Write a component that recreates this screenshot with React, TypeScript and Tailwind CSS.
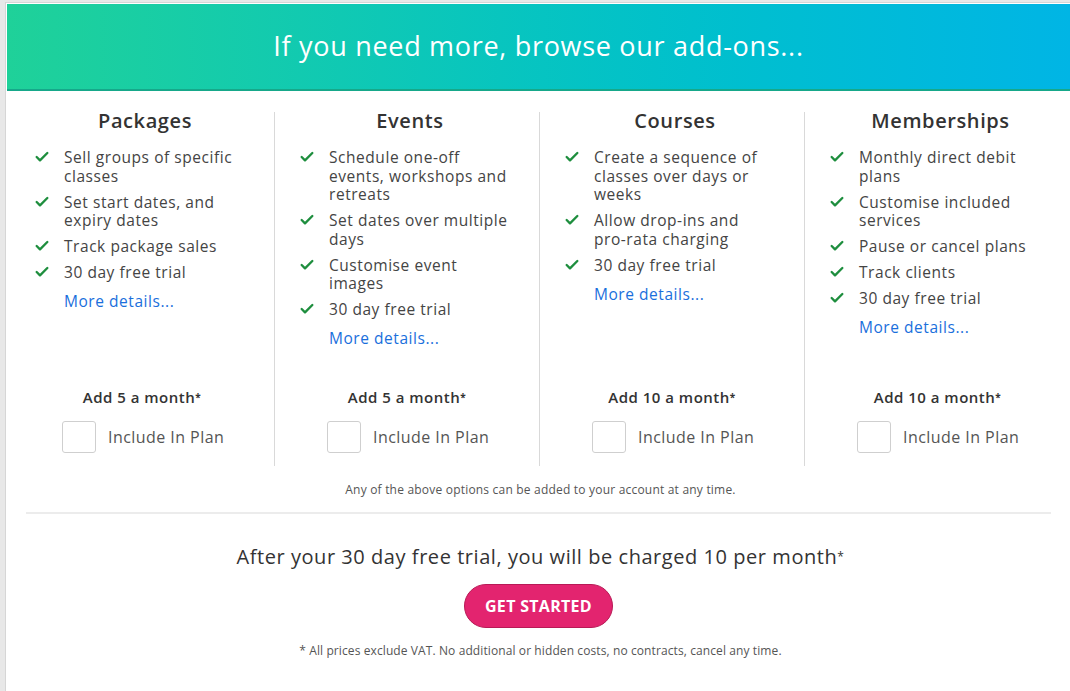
import { Check } from "lucide-react";

type AddOn = {
    title: string;
    features: string[];
    price: string;
};

const addOns: AddOn[] = [
    {
        title: "Packages",
        features: [
            "Sell groups of specific classes",
            "Set start dates, and expiry dates",
            "Track package sales",
            "30 day free trial",
        ],
        price: "Add 5 a month",
    },
    {
        title: "Events",
        features: [
            "Schedule one-off events, workshops and retreats",
            "Set dates over multiple days",
            "Customise event images",
            "30 day free trial",
        ],
        price: "Add 5 a month",
    },
    {
        title: "Courses",
        features: [
            "Create a sequence of classes over days or weeks",
            "Allow drop-ins and pro-rata charging",
            "30 day free trial",
        ],
        price: "Add 10 a month",
    },
    {
        title: "Memberships",
        features: [
            "Monthly direct debit plans",
            "Customise included services",
            "Pause or cancel plans",
            "Track clients",
            "30 day free trial",
        ],
        price: "Add 10 a month",
    },
];

function AddOnColumn({ addOn, last }: { addOn: AddOn; last: boolean }) {
    return (
        <div
            className={
                "flex flex-col pl-[24px] pr-[18px] " +
                (last ? "" : "border-r border-[#d9d9d9]")
            }
        >
            <h3 className="text-center text-[20px] font-semibold text-[#333] leading-[24px] tracking-[0.6px] -mt-[3px] mb-[15px]">
                {addOn.title}
            </h3>
            <ul className="flex-1 tracking-[0.55px]">
                {addOn.features.map((text) => (
                    <li key={text} className="flex items-start mb-[7.5px]">
                        <Check
                            className="w-[16px] h-[16px] text-[#1e8e3e] mt-[1px] shrink-0"
                            strokeWidth={3.5}
                        />
                        <span className="ml-[14px] max-w-[179px] text-[15.5px] leading-[18.5px] text-[#444]">
                            {text}
                        </span>
                    </li>
                ))}
                <li className="pl-[30px]">
                    <a href="#" className="text-[15.5px] leading-[18.5px] text-[#1a6fdc]">
                        More details...
                    </a>
                </li>
            </ul>
            <div className="pt-[36px] pb-[13px]">
                <p className="text-center text-[15px] font-semibold text-[#333] tracking-[0.5px] pr-[6px]">
                    {addOn.price}
                    <sup className="text-[10px] font-bold relative -top-[2px]">*</sup>
                </p>
                <label className="flex items-center mt-[12px] pl-[28px]">
                    <span className="w-[34px] h-[32px] rounded-[3px] border border-[#cfcfcf] bg-white"></span>
                    <span className="ml-[12px] text-[16px] text-[#555] tracking-[0.45px]">
                        Include In Plan
                    </span>
                </label>
            </div>
        </div>
    );
}

export default function App() {
    return (
        <div
            className="min-h-[691px] bg-[#e8e8e8] pl-[5px] pt-[2px]"
            style={{ fontFamily: '"Open Sans", "Liberation Sans", sans-serif' }}
        >
            <div className="min-h-[689px] bg-white border-l border-t border-[#d6d6d6] pl-[1px] pt-[1px]">
                <div className="h-[87px] flex items-center justify-center bg-gradient-to-r from-[#1fd199] to-[#00b5e5] border-b-2 border-[#16a88a]">
                    <h2 className="text-[27px] text-white font-normal tracking-[0.7px]">
                        If you need more, browse our add-ons...
                    </h2>
                </div>

                <div className="grid grid-cols-4 pl-[3px] mt-[21px]">
                    {addOns.map((a, i) => (
                        <AddOnColumn key={a.title} addOn={a} last={i === addOns.length - 1} />
                    ))}
                </div>

                <p className="text-center text-[12px] text-[#555] tracking-[0.2px] mt-[15px] pl-[4px]">
                    Any of the above options can be added to your account at any time.
                </p>

                <div className="mx-[19px] mt-[13px] border-t-2 border-[#ececec]"></div>

                <div className="flex flex-col items-center pt-[28px]">
                    <p className="text-[20px] font-medium text-[#333] tracking-[0.55px] pl-[4px]">
                        After your 30 day free trial, you will be charged 10 per month
                        <sup className="text-[12px] relative -top-[3px]">*</sup>
                    </p>
                    <button className="mt-[12px] w-[149px] h-[44px] rounded-full bg-[#e3246f] border border-[#b81a56] text-white text-[16px] font-bold tracking-[0.3px]">
                        GET STARTED
                    </button>
                    <p className="mt-[14px] text-[12px] text-[#555] tracking-[0.1px] pl-[4px]">
                        * All prices exclude VAT. No additional or hidden costs, no contracts, cancel any time.
                    </p>
                </div>
            </div>
        </div>
    );
}
